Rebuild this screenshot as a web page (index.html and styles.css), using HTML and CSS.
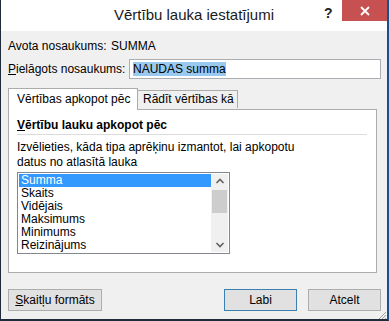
FILE: index.html
```html
<!DOCTYPE html>
<html lang="lv">
<head>
    <meta charset="utf-8" />
    <title>Vērtību lauka iestatījumi</title>
    <link rel="stylesheet" href="styles.css">
</head>
<body>
    <div class="dialog">
        <div class="titlebar">
            <span class="title">Vērtību lauka iestatījumi</span>
            <span class="help">?</span>
            <span class="close">
                <svg width="10" height="10" viewBox="0 0 10 10"><path d="M1 1 L9 9 M9 1 L1 9" stroke="#fff" stroke-width="1.8" /></svg>
            </span>
        </div>

        <div class="content">
            <div class="row source">
                <span class="lbl">Avota nosaukums:</span>
                <span>SUMMA</span>
            </div>
            <div class="row custom">
                <label class="lbl2"><u>P</u>ielāgots nosaukums:</label>
                <div class="namebox"><span class="selected">NAUDAS summa</span></div>
            </div>

            <div class="tabs">
                <div class="tab active">Vērtības apkopot pēc</div>
                <div class="tab second">Rādīt vērtības kā</div>
            </div>
            <div class="panel">
                <div class="group"><u>V</u>ērtību lauku apkopot pēc</div>
                <div class="sep"></div>
                <p class="hint">Izvēlieties, kāda tipa aprēķinu izmantot, lai apkopotu<br/>datus no atlasītā lauka</p>
                <div class="listbox">
                    <ul class="items">
                        <li class="on">Summa</li>
                        <li>Skaits</li>
                        <li>Vidējais</li>
                        <li>Maksimums</li>
                        <li>Minimums</li>
                        <li>Reizinājums</li>
                    </ul>
                    <div class="scroll">
                        <svg width="16" height="14" viewBox="0 0 16 14"><path d="M4.5 9 L8 5.5 L11.5 9" stroke="#606060" stroke-width="1.6" fill="none" /></svg>
                        <div class="thumb"></div>
                        <div class="track"></div>
                        <svg width="16" height="14" viewBox="0 0 16 14"><path d="M4.5 5 L8 8.5 L11.5 5" stroke="#606060" stroke-width="1.6" fill="none" /></svg>
                    </div>
                </div>
            </div>

            <div class="buttons">
                <span class="btn wide"><u>S</u>kaitļu formāts</span>
                <span class="spacer"></span>
                <span class="btn default">Labi</span>
                <span class="btn">Atcelt</span>
            </div>
        </div>
        <div class="grip">
            <svg width="10" height="10" viewBox="0 0 10 10"><path d="M9 2 L2 9 M9 5 L5 9 M9 8 L8 9" stroke="#a0a0a0" stroke-width="1" /></svg>
        </div>
    </div>
</body>
</html>
```
FILE: styles.css
```css
* {
    margin: 0px;
    padding: 0px;
    box-sizing: border-box;
    font-family: 'Liberation Sans', Arial, sans-serif;
}

body {
    background: #f0f0f0;
}

.dialog {
    width: 389px;
    height: 321px;
    background: #f0f0f0;
    border-left: 1px solid #1f2b3a;
    border-right: 2px solid #1b4f8c;
    border-bottom: 2px solid #1f2b3a;
    display: flex;
    flex-direction: column;
    position: relative;
    color: #000;
    font-size: 12px;
}

.titlebar {
    height: 31px;
    background: #fff;
    position: relative;
    flex: none;
}

    .titlebar .title {
        display: block;
        text-align: center;
        font-size: 15px;
        line-height: 30px;
        color: #1a1a1a;
    }

    .titlebar .help {
        position: absolute;
        left: 323px;
        top: 5px;
        font-size: 14px;
        font-weight: bold;
        color: #222;
    }

    .titlebar .close {
        position: absolute;
        right: 0px;
        top: 0px;
        width: 45px;
        height: 21px;
        background: #c75050;
        display: flex;
        align-items: center;
        justify-content: center;
    }

.content {
    flex: 1;
    padding: 6px 6px 0px 7px;
    display: flex;
    flex-direction: column;
}

.row {
    display: flex;
    align-items: center;
}

.source {
    height: 17px;
}

    .source .lbl {
        width: 103px;
    }

.custom {
    margin-top: 5px;
    height: 20px;
}

    .custom .lbl2 {
        width: 121px;
    }

.namebox {
    flex: 1;
    height: 20px;
    background: #fff;
    border: 1px solid #abadb3;
    padding: 2px 3px;
    line-height: 14px;
}

.selected {
    background: #99c9ef;
    color: #000;
}

.tabs {
    display: flex;
    align-items: flex-end;
    margin-top: 9px;
    height: 21px;
    position: relative;
    z-index: 1;
}

.tab {
    height: 18px;
    padding: 0px 5px;
    border: 1px solid #acacac;
    border-bottom: none;
    background: #f0f0f0;
    line-height: 17px;
    font-size: 12px;
    margin-bottom: 1px;
    white-space: nowrap;
    overflow: hidden;
}

    .tab.active {
        width: 130px;
        height: 22px;
        margin-bottom: -1px;
        background: #fff;
        padding: 0px 8px;
        line-height: 20px;
    }

    .tab.second {
        width: 100px;
        border-left: none;
    }

.panel {
    background: #fff;
    border: 1px solid #acacac;
    height: 164px;
    margin-right: 4px;
    padding: 8px 6px 0px 8px;
}

.group {
    font-weight: bold;
    font-size: 12px;
    line-height: 14px;
}

.sep {
    height: 1px;
    background: #dcdcdc;
    margin: 2px 3px 5px 0px;
}

.hint {
    line-height: 15px;
    font-size: 12px;
}

.listbox {
    margin-top: 2px;
    width: 213px;
    height: 82px;
    border: 1px solid #828790;
    display: flex;
    padding: 1px;
}

.items {
    list-style: none;
    flex: 1;
}

    .items li {
        height: 13px;
        line-height: 13px;
        padding-left: 2px;
        font-size: 12px;
    }

        .items li.on {
            background: #3399ff;
            color: #fff;
        }

.scroll {
    width: 17px;
    background: #f0f0f0;
    display: flex;
    flex-direction: column;
    align-items: center;
}

    .scroll .thumb {
        width: 15px;
        height: 23px;
        background: #cdcdcd;
        margin-top: 2px;
    }

    .scroll .track {
        flex: 1;
    }

.buttons {
    display: flex;
    margin-top: 16px;
    gap: 11px;
}

.btn {
    width: 73px;
    height: 22px;
    background: #e1e1e1;
    border: 1px solid #adadad;
    text-align: center;
    line-height: 20px;
    font-size: 12px;
}

    .btn.wide {
        width: 94px;
    }

    .btn.default {
        border-color: #3c7fb1;
    }

.spacer {
    flex: 1;
}

.grip {
    position: absolute;
    right: 0px;
    bottom: 0px;
    width: 10px;
    height: 10px;
}
```
